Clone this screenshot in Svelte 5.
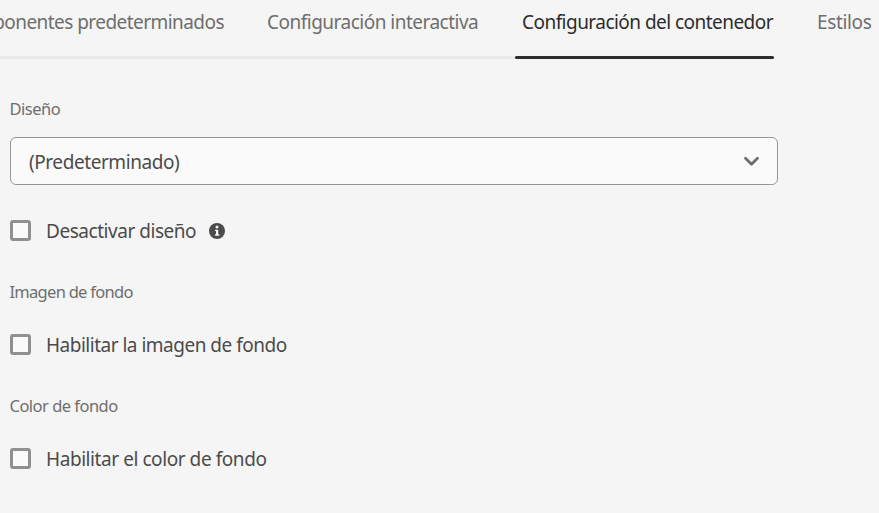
<script>
  const tabs = [
    { label: 'Componentes predeterminados', width: 267, cls: 'first' },
    { label: 'Configuración interactiva', width: 247.5, cls: 'second' },
    { label: 'Configuración del contenedor', width: 259, cls: 'active' },
    { label: 'Estilos', width: 105, cls: 'last' },
  ];
</script>

{#snippet check(label, cls, info = false)}
  <label class="check">
    <input type="checkbox" />
    <span class={cls}>{label}</span>
    {#if info}
      <svg class="info" width="17" height="16" viewBox="0 0 17 16" aria-hidden="true">
        <circle cx="8" cy="8" r="8" fill="#4b4b4b" />
        <circle cx="8" cy="4.1" r="1.5" fill="#f5f5f5" />
        <path d="M6 6.7h3.2v4.6h1v1.4H6v-1.4h1V8.1H6z" fill="#f5f5f5" />
      </svg>
    {/if}
  </label>
{/snippet}

<main>
  <nav>
    {#each tabs as tab}
      <button class={tab.cls} style="width: {tab.width}px"><span>{tab.label}</span></button>
    {/each}
  </nav>
  <section>
    <h3 class="design">Diseño</h3>
    <button class="select">
      <span>(Predeterminado)</span>
      <svg width="17" height="11" viewBox="0 0 17 11" aria-hidden="true">
        <path d="M2.5 2.2L8.5 8.2L14.5 2.2" fill="none" stroke="#6e6e6e" stroke-width="2.8" stroke-linecap="round" stroke-linejoin="round" />
      </svg>
    </button>
    {@render check('Desactivar diseño', 'c1', true)}
    <h3 class="image">Imagen de fondo</h3>
    {@render check('Habilitar la imagen de fondo', 'c2')}
    <h3 class="color">Color de fondo</h3>
    {@render check('Habilitar el color de fondo', 'c3')}
  </section>
</main>

<style>
  :global(body) { background: #f5f5f5; }
  main {
    width: 879px;
    height: 513px;
    overflow: hidden;
    background: #f5f5f5;
    font-family: "Noto Sans", "Open Sans", sans-serif;
    font-size: 19px;
    color: #4b4b4b;
  }
  button { font: inherit; color: inherit; margin: 0; padding: 0; border: 0; background: none; text-align: left; }
  nav { display: flex; height: 59px; color: #6e6e6e; }
  nav button {
    box-sizing: border-box;
    flex: none;
    display: flex;
    height: 59px;
    line-height: 26px;
    padding-top: 9px;
    white-space: nowrap;
    background: linear-gradient(#eaeaea, #eaeaea) 0 100% / 100% 3px no-repeat;
  }
  .first { justify-content: flex-end; padding-right: 43px; letter-spacing: -0.55px; }
  .second { letter-spacing: -0.51px; }
  .active { position: relative; padding-left: 7.5px; color: #2c2c2c; letter-spacing: -0.54px; }
  .active::after {
    content: '';
    position: absolute;
    left: 0;
    right: 0;
    bottom: 0;
    height: 3px;
    border-radius: 1.5px;
    background: #2c2c2c;
  }
  nav .last { padding-left: 43.5px; background: none; letter-spacing: -0.35px; }
  nav span { display: block; }
  section { padding: 38px 0 0 10px; }
  h3 { margin: 0; font-size: 16.5px; font-weight: 400; line-height: 24px; color: #6e6e6e; text-indent: -0.5px; }
  .design { letter-spacing: -0.5px; }
  .image { letter-spacing: -0.72px; }
  .color { letter-spacing: -0.52px; }
  .select {
    box-sizing: border-box;
    width: 768px;
    height: 48px;
    margin: 16px 0 22px;
    padding: 1px 17px 0 18px;
    display: flex;
    align-items: center;
    justify-content: space-between;
    border: 1px solid #959595;
    border-radius: 6px;
    background: #fafafa;
    letter-spacing: -0.43px;
  }
  .check { display: flex; align-items: center; height: 48px; }
  .c1 { letter-spacing: -0.46px; }
  .c2 { letter-spacing: -0.5px; }
  .c3 { letter-spacing: -0.43px; }
  .check + h3 { margin: 25px 0 17px; }
  input {
    appearance: none;
    box-sizing: border-box;
    width: 21px;
    height: 21px;
    margin: 0 15px 1px 0;
    border: 3px solid #909090;
    border-radius: 3px;
    background: #fafafa;
  }
  .info { margin: 0 0 1px 12.6px; }
</style>
